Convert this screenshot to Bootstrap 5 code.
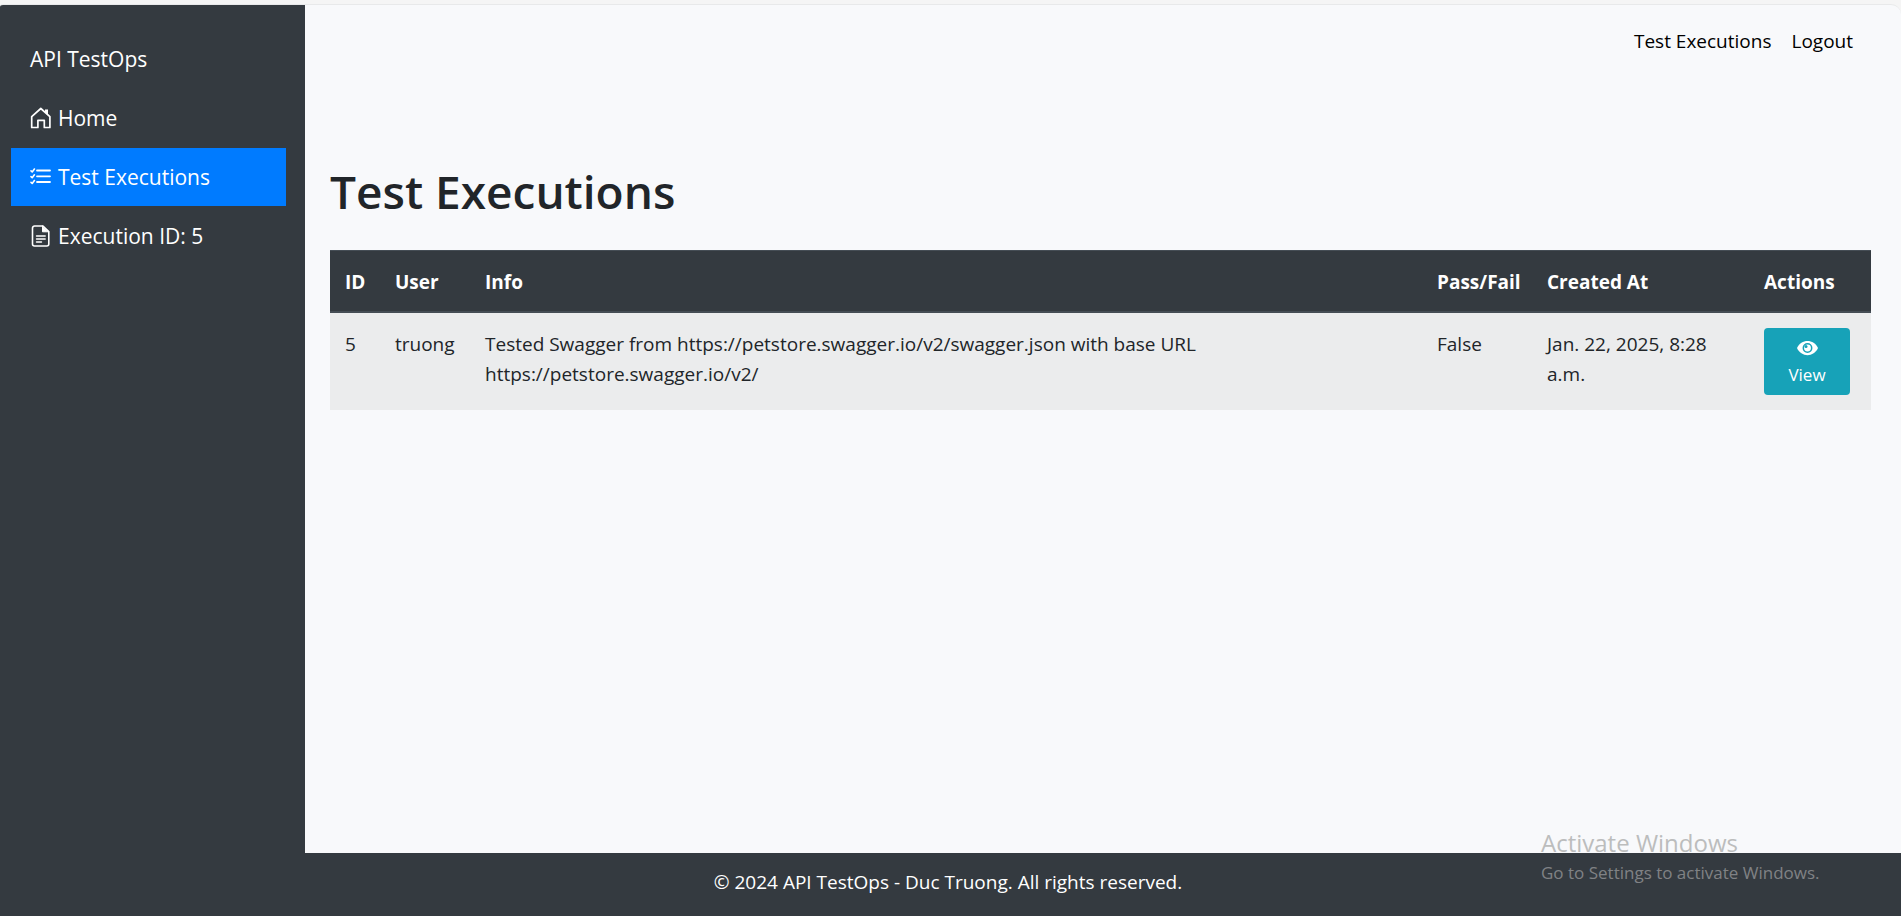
<!DOCTYPE html>
<html lang="en">
<head>
<meta charset="utf-8">
<meta name="viewport" content="width=device-width, initial-scale=1">
<title>Test Executions - API TestOps</title>
<link href="https://cdn.jsdelivr.net/npm/bootstrap@5.3.0/dist/css/bootstrap.min.css" rel="stylesheet">
<style>
  body { font: 400 19px/30px "Open Sans", "Noto Sans", sans-serif; background: #f5f5f5; color: #212529; padding-top: 4px; }
  .bg-ink { background: #343a40; }
  .app-frame { background: #f8f9fb; border-top: 1px solid #e8e9ea; border-radius: 3px 10px 0 0; overflow: hidden; }
  .side-panel { width: 305px; padding: 25px 19px 0 11px; font-size: 21px; gap: 1px; }
  .side-panel a { height: 58px; padding: 0 19px; gap: 7px; color: #fff; border-radius: 0; }
  .side-panel a.active { background: #007bff; }
  .side-panel svg { width: 21px; height: 22px; flex: none; }
  .top-links { gap: 20px; padding: 21px 48px 0 0; }
  .top-links a { color: #000; }
  .page-body { padding: 105px 30px 0 25px; }
  .page-title { font-size: 46px; line-height: 60px; font-weight: 600; margin-bottom: 29px; }
  .runs { table-layout: fixed; --bs-table-bg: transparent; }
  .runs > :not(caption) > * > * { padding: 16px 15px 14px; border: 0; box-shadow: none; }
  .runs > tbody > tr > td:last-child { padding: 15px; }
  .runs thead th { background: #343a40; color: #fff; border-top: 1px solid #454d55; border-bottom: 2px solid #454d55; }
  .runs tbody td { background: #ebeced; color: #212529; }
  .c-id { width: 50px; } .c-user { width: 90px; } .c-result { width: 110px; }
  .c-date { width: 217px; } .c-act { width: 122px; }
  .btn-view { width: 86px; height: 67px; background: #17a2b8; color: #fff; font-size: 17px; line-height: 28px; border-radius: 4px; padding: 5px 0; }
  .btn-view:hover { background: #138496; color: #fff; }
  .btn-view svg { width: 21px; height: 28px; }
  .foot { height: 63px; padding: 0 5px 5px 0; }
  .os-note { right: 76px; bottom: 29px; width: 284px; pointer-events: none; white-space: nowrap; }
  .note-head { font-size: 24px; line-height: 32px; color: #bcbdbd; }
  .note-sub { font-size: 17px; line-height: 28px; color: #808285; }
</style>
</head>
<body class="d-flex flex-column min-vh-100 position-relative">
<div class="app-frame d-flex flex-grow-1">
  <nav class="side-panel bg-ink flex-shrink-0 nav flex-column flex-nowrap" aria-label="Main">
    <a class="nav-link d-flex align-items-center" href="#">API TestOps</a>
    <a class="nav-link d-flex align-items-center" href="#">
      <svg viewBox="0 0 21 22" fill="none" stroke="#fff" stroke-width="1.7" stroke-linejoin="round" aria-hidden="true"><path d="M1.700 20.500V9.600L10.800 1.500l9.100 8.100v10.900h-5.600v-7.200H7.900v7.200z"/><path d="M15 2.500h3v5.700l-3-2.600z" fill="#fff" stroke="none"/></svg>
      <span>Home</span></a>
    <a class="nav-link d-flex align-items-center active" aria-current="page" href="#">
      <svg viewBox="0 0 21 22" fill="none" stroke="#fff" stroke-width="1.8" stroke-linecap="round" stroke-linejoin="round" aria-hidden="true"><path d="M7 4.500h13M7 10.300h13M7 16h13"/><path d="M1 4.800l1.200 1.100L4.400 3M1 10.600l1.200 1.100 2.200-2.900M1 16.300l1.200 1.100 2.200-2.900" stroke-width="1.6"/></svg>
      <span>Test Executions</span></a>
    <a class="nav-link d-flex align-items-center" href="#">
      <svg viewBox="0 0 21 22" fill="none" stroke="#fff" stroke-width="1.6" stroke-linecap="round" stroke-linejoin="round" aria-hidden="true"><path d="M13 1H4.500a2 2 0 0 0-2 2v16a2 2 0 0 0 2 2h12.300a2 2 0 0 0 2-2V6.500z"/><path d="M12.500 1.200v5.600h6z" fill="#fff" stroke-width="1"/><path d="M6.500 11h8.700M6.500 14h8.700M6.500 17h5" stroke-width="1.4"/></svg>
      <span>Execution ID: 5</span></a>
  </nav>
  <div class="flex-grow-1">
    <nav class="top-links d-flex justify-content-end" aria-label="Account">
      <a class="text-decoration-none" href="#">Test Executions</a>
      <a class="text-decoration-none" href="#">Logout</a>
    </nav>
    <main class="page-body">
      <h1 class="page-title">Test Executions</h1>
      <table class="table runs mb-0">
        <colgroup><col class="c-id"><col class="c-user"><col><col class="c-result"><col class="c-date"><col class="c-act"></colgroup>
        <thead><tr><th>ID</th><th>User</th><th>Info</th><th>Pass/Fail</th><th>Created At</th><th>Actions</th></tr></thead>
        <tbody><tr>
          <td>5</td><td>truong</td>
          <td>Tested Swagger from https://petstore.swagger.io/v2/swagger.json with base URL https://petstore.swagger.io/v2/</td>
          <td>False</td><td>Jan. 22, 2025, 8:28 a.m.</td>
          <td><button type="button" class="btn btn-view border-0 d-flex flex-column align-items-center">
            <svg viewBox="0 0 21 28" aria-hidden="true"><path d="M0 15C4 5.500 17 5.500 21 15 17 24.500 4 24.500 0 15z" fill="#fff"/><circle cx="10.500" cy="15" r="4.200" fill="#fff" stroke="#17a2b8" stroke-width="1.500"/><circle cx="9" cy="13.500" r="1.500" fill="#17a2b8"/></svg>
            <span>View</span></button></td>
        </tr></tbody>
      </table>
    </main>
  </div>
</div>
<footer class="foot bg-ink text-white d-flex align-items-center justify-content-center">© 2024 API TestOps - Duc Truong. All rights reserved.</footer>
<div class="os-note position-absolute">
  <div class="note-head">Activate Windows</div>
  <div class="note-sub">Go to Settings to activate Windows.</div>
</div>
<script src="https://cdn.jsdelivr.net/npm/bootstrap@5.3.0/dist/js/bootstrap.bundle.min.js"></script>
</body>
</html>
